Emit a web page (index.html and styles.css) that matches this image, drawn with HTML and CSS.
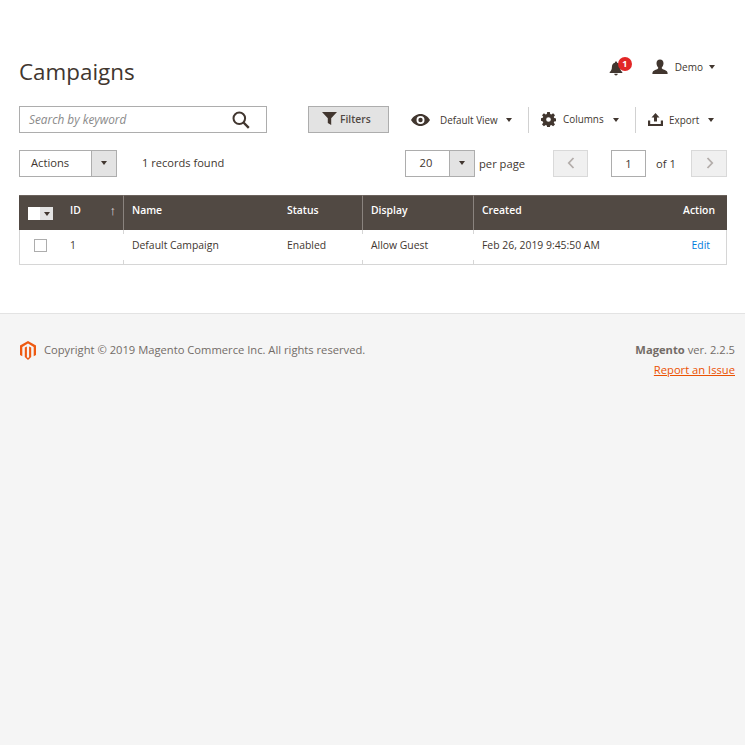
FILE: index.html
```html
<!DOCTYPE html>
<html lang="en">
<head>
<meta charset="utf-8">
<title>Campaigns</title>
<link rel="stylesheet" href="styles.css">
</head>
<body>
<div class="page">
<main class="main">
  <header class="page-header">
    <h1 class="title">Campaigns</h1>
    <div class="header-actions">
      <div class="bell">
        <svg class="bell-icon" viewBox="0 0 14 15" width="14" height="15"><path fill="#41362f" d="M7 0.6c.7 0 1.1.5 1.1 1.1 2 .5 3 2.1 3 4.2 0 2.600.8 3.800 2.200 5.200v.9H.7v-.9C2.100 9.700 2.900 8.500 2.900 5.900c0-2.100 1-3.700 3-4.200C5.900 1.100 6.300.6 7 .6z"/><path fill="#41362f" d="M5.300 12.800h3.400c0 1-.7 1.700-1.700 1.700s-1.700-.7-1.700-1.700z"/></svg>
        <span class="badge">1</span>
      </div>
      <div class="user">
        <svg viewBox="0 0 16 16" width="16" height="16"><path fill="#41362f" d="M8 .5c2.200 0 3.500 1.500 3.500 3.700 0 1.900-.9 3.500-1.700 4.400-.2.800.2 1.300 1 1.600 2 .8 4.400 1.400 4.700 3.200.1.600.1 1.100.1 1.600H.4c0-.5 0-1 .1-1.600.3-1.800 2.700-2.400 4.700-3.200.8-.3 1.200-.8 1-1.600C5.400 7.700 4.500 6.100 4.500 4.200 4.500 2 5.800.5 8 .5z"/></svg>
        <span class="user-name">Demo</span>
        <span class="caret caret-user"></span>
      </div>
    </div>
  </header>

  <div class="toolbar">
    <div class="search">
      <span class="search-text">Search by keyword</span>
      <svg viewBox="0 0 18 18" width="18" height="18"><circle cx="7.300" cy="7.300" r="5.800" fill="none" stroke="#41362f" stroke-width="2"/><path d="M11.500 11.500l5.300 5.300" stroke="#41362f" stroke-width="2.400" fill="none"/></svg>
    </div>
    <button class="filters" type="button">
      <svg viewBox="0 0 15 13" width="15" height="13"><path fill="#41362f" d="M0 0h15L9.200 6.200V13L5.800 11V6.200z"/></svg>
      <span>Filters</span>
    </button>
    <div class="tool tool-view">
      <svg viewBox="0 0 19 12" width="19" height="12"><path fill="#41362f" fill-rule="evenodd" d="M9.500 0c4 0 7.300 2.500 9.500 6-2.200 3.500-5.500 6-9.500 6S2.200 9.500 0 6c2.200-3.500 5.500-6 9.500-6zm0 2a4 4 0 1 0 0 8 4 4 0 0 0 0-8z"/><circle cx="9.500" cy="6" r="2.200" fill="#41362f"/></svg>
      <span class="tool-label view-label">Default View</span>
      <span class="caret"></span>
    </div>
    <div class="tool tool-columns">
      <svg viewBox="0 0 16 16" width="15" height="15"><path fill="#41362f" fill-rule="evenodd" d="M6.600 0h2.800l.4 2.200 1.200.5L12.900 1.400l2 2-1.300 1.900.5 1.200 2.200.4v2.800l-2.200.4-.5 1.200 1.300 1.900-2 2-1.900-1.300-1.200.5-.4 2.200H6.600l-.4-2.200-1.200-.5-1.900 1.300-2-2 1.300-1.900-.5-1.200L0 9.400V6.600l1.900-.4.5-1.200L1.100 3.400l2-2L5 2.700l1.200-.5zM8 5.500a2.500 2.500 0 1 0 0 5 2.500 2.500 0 0 0 0-5z"/></svg>
      <span class="tool-label columns-label">Columns</span>
      <span class="caret"></span>
    </div>
    <div class="tool tool-export">
      <svg viewBox="0 0 15 13" width="15" height="13"><path fill="#41362f" d="M7.500 0l4 4.400H9v4.200H6V4.400H3.500zM0 7.500h2.200V11h10.600V7.500H15V13H0z"/></svg>
      <span class="tool-label export-label">Export</span>
      <span class="caret"></span>
    </div>
  </div>

  <div class="pager-row">
    <div class="select select-actions">
      <span class="select-value">Actions</span>
      <span class="select-btn"><span class="caret"></span></span>
    </div>
    <span class="records">1 records found</span>
    <div class="select select-perpage">
      <span class="select-value">20</span>
      <span class="select-btn"><span class="caret"></span></span>
    </div>
    <span class="per-page">per page</span>
    <span class="page-btn page-prev"><svg viewBox="0 0 8 12" width="8" height="12"><path d="M6.500 1L1.800 6l4.700 5" fill="none" stroke="#b3adaa" stroke-width="1.800"/></svg></span>
    <span class="page-input">1</span>
    <span class="of">of 1</span>
    <span class="page-btn page-next"><svg viewBox="0 0 8 12" width="8" height="12"><path d="M1.500 1l4.700 5-4.700 5" fill="none" stroke="#b3adaa" stroke-width="1.800"/></svg></span>
  </div>

  <table class="grid">
    <colgroup>
      <col class="c-check"><col class="c-id"><col class="c-name"><col class="c-status"><col class="c-display"><col class="c-created"><col class="c-action">
    </colgroup>
    <thead>
      <tr>
        <th class="th-check"><span class="mass"><span class="mass-box"></span><span class="mass-btn"><span class="caret"></span></span></span></th>
        <th class="th-id"><span class="id-label">ID</span><span class="arrow">↑</span></th>
        <th class="sep">Name</th>
        <th>Status</th>
        <th class="sep">Display</th>
        <th class="sep">Created</th>
        <th class="th-action">Action</th>
      </tr>
    </thead>
    <tbody>
      <tr>
        <td class="td-check"><span class="checkbox"></span></td>
        <td>1</td>
        <td class="tick">Default Campaign</td>
        <td>Enabled</td>
        <td class="tick">Allow Guest</td>
        <td class="tick">Feb 26, 2019 9:45:50 AM</td>
        <td class="td-action"><a class="edit" href="#">Edit</a></td>
      </tr>
    </tbody>
  </table>
</main>

<footer class="footer">
  <div class="copyright">
    <svg viewBox="0 0 16 19" width="16" height="19"><path fill="#ee5a12" d="M8 0l8 4.600v9.300l-2.300 1.300V5.900L8 2.600 2.300 5.900v9.300L0 13.900V4.600z"/><path fill="#ee5a12" d="M6.900 5.400v10.900L8 17l1.100-.7V5.400l2.100 1.200v9.500L8 19l-3.200-2.900V6.600z"/></svg>
    <span>Copyright © 2019 Magento Commerce Inc. All rights reserved.</span>
  </div>
  <div class="legal">
    <div class="version"><strong>Magento</strong> ver. 2.2.5</div>
    <a class="report" href="#">Report an Issue</a>
  </div>
</footer>
</div>
</body>
</html>
```
FILE: styles.css
```css
* { box-sizing: border-box; }
html, body { margin: 0; padding: 0; }
body {
  font-family: "Open Sans", sans-serif;
  font-size: 11px;
  color: #41362f;
  background: #fff;
}
.page { min-height: 745px; display: flex; flex-direction: column; }
.main { padding: 55px 18px 0 19px; height: 313px; flex: none; }

.page-header { display: flex; justify-content: space-between; align-items: center; height: 34px; }
.title { margin: 0; font-size: 22.400px; font-weight: 400; line-height: 34px; color: #41362f; }
.header-actions { display: flex; align-items: center; margin-top: -10px; }
.bell { position: relative; width: 14px; height: 15px; margin-right: 29px; top: 1px; }
.bell-icon { display: block; }
.badge {
  position: absolute; left: 9px; top: -4px; width: 14px; height: 14px; border-radius: 50%;
  background: #e22626; color: #fff; font-size: 9px; font-weight: 700; line-height: 14px; text-align: center;
}
.user { display: flex; align-items: center; margin-right: 12px; }
.user-name { font-size: 10px; margin-left: 7px; margin-right: 6px; }
.caret {
  display: inline-block; width: 0; height: 0;
  border-left: 3.500px solid transparent; border-right: 3.500px solid transparent; border-top: 4px solid #41362f;
}

.toolbar { display: flex; align-items: center; height: 27px; margin-top: 17px; }
.search {
  width: 248px; height: 27px; border: 1px solid #adadad; display: flex; align-items: center;
  justify-content: space-between; padding: 0 16px 0 9px;
}
.search-text { font-style: italic; color: #8a8a8a; font-size: 11.800px; line-height: 15px; padding-bottom: 1px; }
.filters {
  margin-left: 41px; width: 81px; height: 27px; border: 1px solid #adadad; background: #e3e3e3;
  display: flex; align-items: center; padding: 0 0 2px 13px; gap: 3px;
  font-family: inherit; font-size: 10.300px; font-weight: 600; color: #514943;
}
.tool { display: flex; align-items: center; height: 26px; }
.tool-view { margin-left: 22px; width: 117px; }
.tool-columns { width: 107px; border-left: 1px solid #d1d1d1; padding-left: 12px; }
.tool-export { border-left: 1px solid #d1d1d1; padding-left: 12px; }
.tool-label { font-size: 9.900px; margin-left: 7px; margin-right: 9px; }
.view-label { margin-left: 10px; margin-right: 8px; }
.columns-label { margin-top: -2px; margin-left: 7px; }
.export-label { margin-left: 6px; }

.pager-row { display: flex; align-items: center; height: 28px; margin-top: 16px; }
.select { height: 27px; border: 1px solid #adadad; display: flex; align-items: stretch; }
.select-value { flex: 1; line-height: 24px; font-size: 11.200px; }
.select-btn { width: 25px; background: #e3e3e3; border-left: 1px solid #adadad; display: flex; align-items: center; justify-content: center; }
.select-actions { width: 98px; }
.select-actions .select-value { padding-left: 11px; }
.records { margin-left: 25px; width: 83px; font-size: 11.100px; padding-bottom: 1px; white-space: nowrap; }
.select-perpage { width: 70px; margin-left: 180px; }
.select-perpage .select-value { text-align: center; padding-right: 3px; }
.per-page { margin-left: 4px; width: 46px; font-size: 11.200px; white-space: nowrap; }
.page-btn { width: 35px; height: 27px; background: #f0f0f0; border: 1px solid #d9d9d9; display: flex; align-items: center; justify-content: center; }
.page-prev { margin-left: 28px; }
.page-next { width: 36px; padding-left: 2px; }
.page-input { width: 35px; height: 27px; margin-left: 23px; border: 1px solid #adadad; text-align: center; line-height: 25px; font-size: 11.200px; }
.of { margin-left: 10px; width: 35px; font-size: 11.200px; }

.grid { width: 708px; margin-top: 18px; border-collapse: separate; border-spacing: 0; table-layout: fixed; }
.c-check { width: 43px; } .c-id { width: 61px; } .c-name { width: 156px; } .c-status { width: 83px; }
.c-display { width: 111px; } .c-created { width: 170px; } .c-action { width: 84px; }
.grid th {
  height: 35px; background: #514943; color: #fff; text-align: left; font-weight: 600; font-size: 10.400px;
  padding: 0 8px 6px; border-top: 1px solid #6b625c; vertical-align: middle;
}
.grid th.sep { border-left: 1px solid #8a837e; }
.grid th.th-check { padding: 0 0 0 9px; }
.mass { display: flex; width: 25px; height: 13px; margin-top: 1px; }
.mass-box { width: 12px; background: #fff; }
.mass-btn { flex: 1; background: #e3e3e3; display: flex; align-items: center; justify-content: center; }
.grid th.th-id { padding: 0 7px 6px 8px; }
.id-label { display: inline-block; width: 35px; }
.arrow { float: right; font-size: 13px; line-height: 14px; font-weight: 400; color: #e0dcda; }
.grid th.th-action { text-align: right; padding-right: 12px; }
.grid td {
  height: 35px; padding: 0 8px 4px; font-size: 10.400px; color: #41362f; border-bottom: 1px solid #d6d6d6;
}
.grid td.tick {
  background-image: linear-gradient(#d6d6d6, #d6d6d6), linear-gradient(#d6d6d6, #d6d6d6);
  background-size: 1px 4px, 1px 4px; background-position: left top, left bottom; background-repeat: no-repeat;
  padding-left: 9px;
}
.grid td.td-check { border-left: 1px solid #d6d6d6; padding: 0 0 4px 14px; }
.checkbox { display: block; width: 13px; height: 13px; border: 1px solid #adadad; }
.grid td.td-action { text-align: right; padding-right: 16px; border-right: 1px solid #d6d6d6; }
.edit { color: #007bdb; text-decoration: none; }

.footer {
  flex: 1; background: #f5f5f5; border-top: 1px solid #e3e3e3; display: flex; justify-content: space-between;
  padding: 27px 10px 0 20px; font-size: 11.200px; color: #736c67;
}
.copyright { display: flex; align-items: flex-start; gap: 8px; height: 20px; }
.copyright span { line-height: 18px; }
.legal { text-align: right; line-height: 20px; margin-top: -1px; }
.version strong { font-weight: 700; }
.report { color: #eb5202; text-decoration: underline; }
```
